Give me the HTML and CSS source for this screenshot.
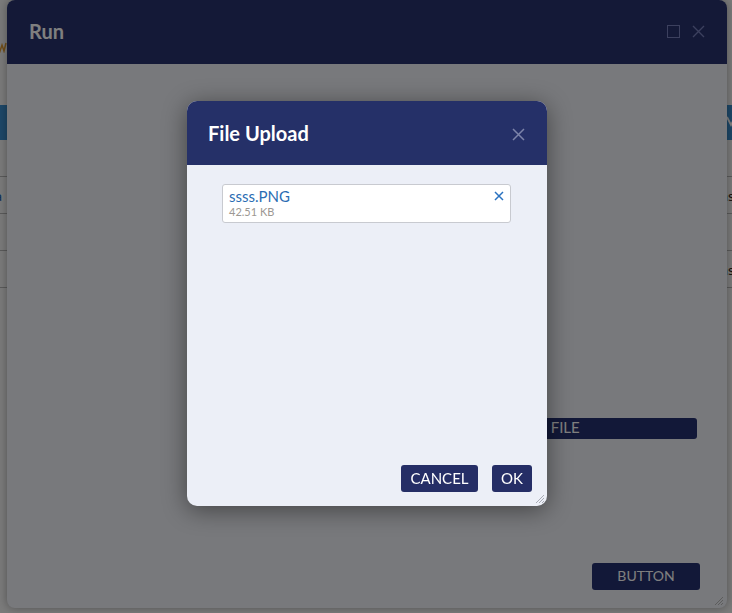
FILE: index.html
```html
<!DOCTYPE html>
<html lang="en">
<head>
<meta charset="utf-8">
<title>Run</title>
<link rel="stylesheet" href="styles.css">
</head>
<body>
<div class="page">
  <div class="topbar">
    <svg class="logo" width="12" height="12" viewBox="0 0 12 12"><polyline points="0,2 2,10 4,4 6,10 8,2" fill="none" stroke="#e09a30" stroke-width="1.5"/></svg>
  </div>
  <div class="bluebar">
    <svg class="chev" width="10" height="16" viewBox="0 0 10 16"><polyline points="1,1 5,9 9,1" fill="none" stroke="#fff" stroke-width="1.8"/></svg>
  </div>
  <div class="row"><span class="cell-l"></span><span class="cell-r"></span></div>
  <div class="row"><span class="cell-l link">a</span><span class="cell-r">Basic</span></div>
  <div class="row"><span class="cell-l"></span><span class="cell-r"></span></div>
  <div class="row"><span class="cell-l"></span><span class="cell-r">Basic</span></div>
</div>

<div class="run">
  <div class="run-head">
    <span class="run-title">Run</span>
    <span class="run-icons">
      <svg width="13" height="13" viewBox="0 0 13 13"><rect x="0.5" y="0.5" width="12" height="12" fill="none" stroke="#7880bc" stroke-width="1"/></svg>
      <svg width="13" height="13" viewBox="0 0 13 13"><path d="M1 1 L12 12 M12 1 L1 12" stroke="#7880bc" stroke-width="1.4"/></svg>
    </span>
  </div>
  <div class="run-body">
    <button class="file-btn">UPLOAD FILE</button>
    <button class="plain-btn">BUTTON</button>
  </div>
  <svg class="grip" width="10" height="10" viewBox="0 0 10 10"><path d="M9 1 L1 9 M9 4 L4 9 M9 7 L7 9" stroke="#bbb" stroke-width="1"/></svg>
</div>

<div class="overlay"></div>

<div class="dialog">
  <div class="dlg-head">
    <span class="dlg-title">File Upload</span>
    <svg class="dlg-close" width="13" height="13" viewBox="0 0 13 13"><path d="M1 1 L12 12 M12 1 L1 12" stroke="#7d84aa" stroke-width="1.5"/></svg>
  </div>
  <div class="dlg-body">
    <div class="file-item">
      <div class="file-info">
        <span class="file-name">ssss.PNG</span>
        <span class="file-size">42.51 KB</span>
      </div>
      <svg class="file-remove" width="10" height="10" viewBox="0 0 10 10"><path d="M1 1 L9 9 M9 1 L1 9" stroke="#2a72c0" stroke-width="1.5"/></svg>
    </div>
  </div>
  <div class="dlg-foot">
    <button class="dlg-btn cancel">CANCEL</button>
    <button class="dlg-btn ok">OK</button>
  </div>
  <svg class="grip dlg-grip" width="10" height="10" viewBox="0 0 10 10"><path d="M9 1 L1 9 M9 4 L4 9 M9 7 L7 9" stroke="#a8abb5" stroke-width="1"/></svg>
</div>
</body>
</html>
```

FILE: styles.css
```css
* { box-sizing: border-box; }

html, body {
  margin: 0;
  width: 732px;
  height: 613px;
  overflow: hidden;
}

body {
  position: relative;
  font-family: Lato, "Open Sans", "Liberation Sans", sans-serif;
  background: #f6f6f6;
}

/* background page */
.page {
  display: flex;
  flex-direction: column;
}

.topbar {
  height: 105px;
  display: flex;
  align-items: flex-start;
  padding-top: 41px;
}

.logo { margin-left: -2px; }

.bluebar {
  height: 35px;
  background: #3b8fd0;
  display: flex;
  justify-content: flex-end;
  align-items: center;
}

.chev { margin-right: -4px; margin-top: 2px; }

.row {
  height: 37px;
  border-bottom: 1px solid #b6b6b6;
  display: flex;
  align-items: center;
  justify-content: space-between;
  font-size: 14px;
}

.cell-l.link {
  color: #1c5fb0;
  margin-left: -5px;
}

.cell-r {
  color: #3a2414;
  margin-right: -12px;
}

/* Run window */
.run {
  position: absolute;
  left: 7px;
  top: 0;
  width: 720px;
  height: 608px;
  background: #f0f2f9;
  border-radius: 8px;
  box-shadow: 0 0 10px rgba(0, 0, 0, 0.35);
  display: flex;
  flex-direction: column;
  overflow: hidden;
}

.run-head {
  height: 64px;
  flex: none;
  background: #28326e;
  display: flex;
  align-items: center;
  justify-content: space-between;
  padding: 0 22px;
}

.run-title {
  color: #ffffff;
  font-size: 20px;
  font-weight: 700;
  margin-top: -2px;
}

.run-icons {
  display: flex;
  gap: 12px;
  align-items: center;
  margin-top: -2px;
}

.run-icons svg { display: block; }

.run-body {
  flex: 1;
  display: flex;
  flex-direction: column;
  align-items: flex-end;
  padding: 0 27px 18px 30px;
}

.file-btn {
  margin-top: 354px;
  margin-right: 3px;
  width: 328px;
  height: 21px;
  border: none;
  border-radius: 3px;
  background: #243070;
  color: #ffffff;
  font-family: inherit;
  font-size: 15px;
  padding: 0 0 2px;
  line-height: 19px;
}

.plain-btn {
  margin-top: auto;
  width: 108px;
  height: 27px;
  border: none;
  border-radius: 3px;
  background: #243070;
  color: #ffffff;
  font-family: inherit;
  font-size: 14px;
  padding: 0 0 2px;
}

.grip {
  position: absolute;
  right: 3px;
  bottom: 2px;
}

/* overlay */
.overlay {
  position: fixed;
  inset: 0;
  background: rgba(0, 0, 0, 0.5);
}

/* File Upload dialog */
.dialog {
  position: absolute;
  left: 187px;
  top: 101px;
  width: 360px;
  height: 405px;
  background: #eceff7;
  border-radius: 10px;
  overflow: hidden;
  box-shadow: 0 4px 24px rgba(0, 0, 0, 0.45);
  display: flex;
  flex-direction: column;
}

.dlg-head {
  height: 64px;
  flex: none;
  background: #253068;
  display: flex;
  align-items: center;
  justify-content: space-between;
  padding: 0 22px 0 21px;
}

.dlg-title {
  color: #ffffff;
  font-size: 20px;
  font-weight: 700;
  margin-top: -1px;
}

.dlg-close { display: block; margin-top: 2px; }

.dlg-body {
  flex: 1;
  padding: 19px 36px 0 35px;
}

.file-item {
  height: 39px;
  background: #ffffff;
  border: 1px solid #c8cad0;
  border-radius: 3px;
  display: flex;
  justify-content: space-between;
  align-items: flex-start;
  padding: 2px 6px 0 6px;
}

.file-info {
  display: flex;
  flex-direction: column;
}

.file-name {
  color: #2b6db3;
  font-size: 15px;
  line-height: 18px;
}

.file-size {
  color: #9c9893;
  font-size: 11px;
  line-height: 13px;
}

.file-remove {
  display: block;
  margin-top: 4px;
}

.dlg-foot {
  display: flex;
  justify-content: flex-end;
  gap: 14px;
  padding: 0 15px 14px;
}

.dlg-btn {
  height: 27px;
  border: none;
  border-radius: 3px;
  background: #252e66;
  color: #ffffff;
  font-family: inherit;
  font-size: 15px;
  padding: 0 0 2px;
}

.cancel { width: 77px; }
.ok { width: 40px; }

.dlg-grip {
  right: 2px;
  bottom: 2px;
}
```
